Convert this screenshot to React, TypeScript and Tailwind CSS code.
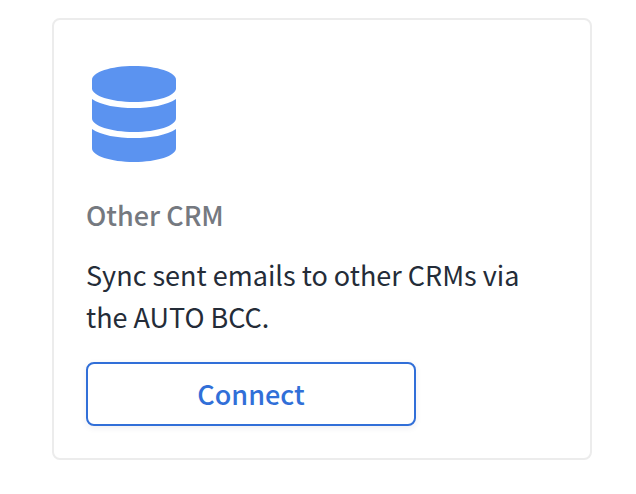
function DatabaseIcon() {
  return (
    <svg viewBox="0 0 448 512" className="h-24 w-[84px] fill-[#5b93f0]" aria-hidden="true">
      <path d="M448 73.143v45.714C448 159.143 347.667 192 224 192S0 159.143 0 118.857V73.143C0 32.857 100.333 0 224 0s224 32.857 224 73.143z" />
      <path d="M448 176v102.857C448 319.143 347.667 352 224 352S0 319.143 0 278.857V176c48.125 33.143 136.208 48.572 224 48.572S399.874 209.143 448 176z" />
      <path d="M448 336v102.857C448 479.143 347.667 512 224 512S0 479.143 0 438.857V336c48.125 33.143 136.208 48.572 224 48.572S399.874 369.143 448 336z" />
    </svg>
  );
}

export default function App() {
  return (
    <main className="min-h-screen bg-white pt-[18px] pr-11 pb-8 pl-[52px] font-['Noto_Sans_CJK_SC',sans-serif]">
      <section className="rounded-lg border-2 border-[#ececec] px-8 pt-[46px] pb-8">
        <div className="px-1.5">
          <DatabaseIcon />
        </div>
        <h2 className="mt-8 text-[27px] leading-[42px] font-medium text-[#757980]">Other CRM</h2>
        <p className="mt-[18px] max-w-[450px] text-[27px] leading-[42px] text-[#242c38]">
          Sync sent emails to other CRMs via the AUTO BCC.
        </p>
        <button
          type="button"
          className="mt-6 h-16 w-full max-w-[330px] rounded-lg border-2 border-[#316fd8] bg-white text-[27px] leading-[42px] font-medium text-[#316fd8] shadow-[0_2px_6px_rgba(40,40,90,0.08)]"
        >
          Connect
        </button>
      </section>
    </main>
  );
}
